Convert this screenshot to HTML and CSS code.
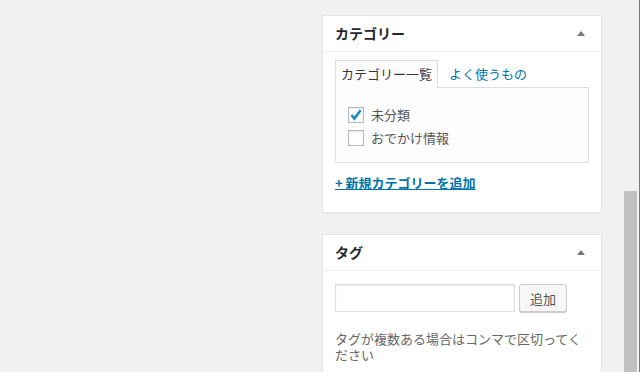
FILE: index.html
```html
<!DOCTYPE html>
<html lang="ja">
<head>
  <meta charset="UTF-8">
  <title>投稿の編集</title>
  <link rel="stylesheet" href="styles.css">
</head>
<body>

  <!-- サイドバー（メタボックス） -->
  <div class="sidebar">

    <div class="postbox">
      <h2 class="hndle">
        <span>カテゴリー</span>
        <span class="toggle"></span>
      </h2>
      <div class="inside">
        <ul class="tabs">
          <li class="tab active">カテゴリー一覧</li>
          <li class="tab"><a href="#">よく使うもの</a></li>
        </ul>
        <div class="tabs-panel">
          <label class="cat">
            <span class="check checked">
              <svg width="14" height="14" viewBox="0 0 14 14"><path d="M2.5 7.2 L5.4 10.6 L11.6 2.2" fill="none" stroke="#1e8cbe" stroke-width="2.6"/></svg>
            </span>
            未分類
          </label>
          <label class="cat">
            <span class="check"></span>
            おでかけ情報
          </label>
        </div>
        <p class="add-new"><a href="#">+ 新規カテゴリーを追加</a></p>
      </div>
    </div>

    <div class="postbox">
      <h2 class="hndle">
        <span>タグ</span>
        <span class="toggle"></span>
      </h2>
      <div class="inside">
        <div class="tag-add">
          <input type="text" class="tag-input">
          <button type="button" class="button">追加</button>
        </div>
        <p class="howto">タグが複数ある場合はコンマで区切ってください</p>
      </div>
    </div>

  </div>

  <!-- スクロールバー -->
  <div class="scrollbar">
    <div class="thumb"></div>
  </div>

</body>
</html>
```

FILE: styles.css
```css
html, body {
  height: 100%;
}

body {
  margin: 0;
  background: #f1f1f1;
  color: #444;
  font-family: "Noto Sans CJK JP", "Liberation Sans", sans-serif;
  font-size: 13px;
  display: flex;
  justify-content: flex-end;
  overflow: hidden;
}

.sidebar {
  width: 280px;
  flex: 0 0 280px;
  padding-top: 15px;
}

.postbox {
  background: #fff;
  border: 1px solid #e5e5e5;
  box-shadow: 0 1px 1px rgba(0, 0, 0, .04);
  margin-bottom: 21px;
}

.hndle {
  margin: 0;
  padding: 8px 12px;
  font-size: 14px;
  line-height: 19px;
  font-weight: 600;
  color: #23282d;
  border-bottom: 1px solid #eee;
  display: flex;
  justify-content: space-between;
  align-items: center;
}

.toggle {
  width: 0;
  height: 0;
  border-left: 4px solid transparent;
  border-right: 4px solid transparent;
  border-bottom: 5px solid #72777c;
  margin-right: 4px;
}

.inside {
  padding: 8px 12px 19px;
}

a {
  color: #0073aa;
  text-decoration: none;
}

.tabs {
  list-style: none;
  margin: 0 0 -1px;
  padding: 0;
  display: flex;
  position: relative;
}

.tab {
  padding: 4px 5px 5px;
  line-height: 18px;
  border: 1px solid transparent;
  border-bottom: none;
  margin-right: 5px;
}

.tab.active {
  border-color: #ddd;
  background: #fdfdfd;
  color: #32373c;
}

.tabs-panel {
  border: 1px solid #ddd;
  background: #fdfdfd;
  padding: 15px 12px 13px;
}

.cat {
  display: flex;
  align-items: center;
  height: 23px;
  color: #555;
}

.check {
  width: 14px;
  height: 14px;
  border: 1px solid #b4b9be;
  background: #fff;
  box-shadow: inset 0 1px 2px rgba(0, 0, 0, .1);
  margin-right: 7px;
  display: flex;
}

.add-new {
  margin: 10px 0 0;
  line-height: 20px;
  font-weight: 600;
}

.add-new a {
  text-decoration: underline;
}

.tag-add {
  display: flex;
  align-items: flex-start;
  gap: 4px;
  padding-top: 5px;
}

.tag-input {
  width: 180px;
  height: 28px;
  box-sizing: border-box;
  margin: 0;
  border: 1px solid #ddd;
  box-shadow: inset 0 1px 2px rgba(0, 0, 0, .07);
  background: #fff;
}

.button {
  height: 28px;
  width: 48px;
  margin: 0;
  padding: 0;
  font-family: inherit;
  font-size: 13px;
  color: #555;
  background: #f7f7f7;
  border: 1px solid #ccc;
  border-radius: 3px;
  box-shadow: 0 1px 0 #ccc;
}

.howto {
  margin: 19px 0 0;
  line-height: 16px;
  color: #666;
}

.scrollbar {
  flex: 0 0 18px;
  width: 18px;
  margin-left: 20px;
  height: 100%;
  border-right: 1px solid #3f87c9;
  padding-left: 2px;
  box-sizing: border-box;
}

.thumb {
  width: 13px;
  margin-top: 191px;
  height: 400px;
  background: #c1c1c1;
}
```
